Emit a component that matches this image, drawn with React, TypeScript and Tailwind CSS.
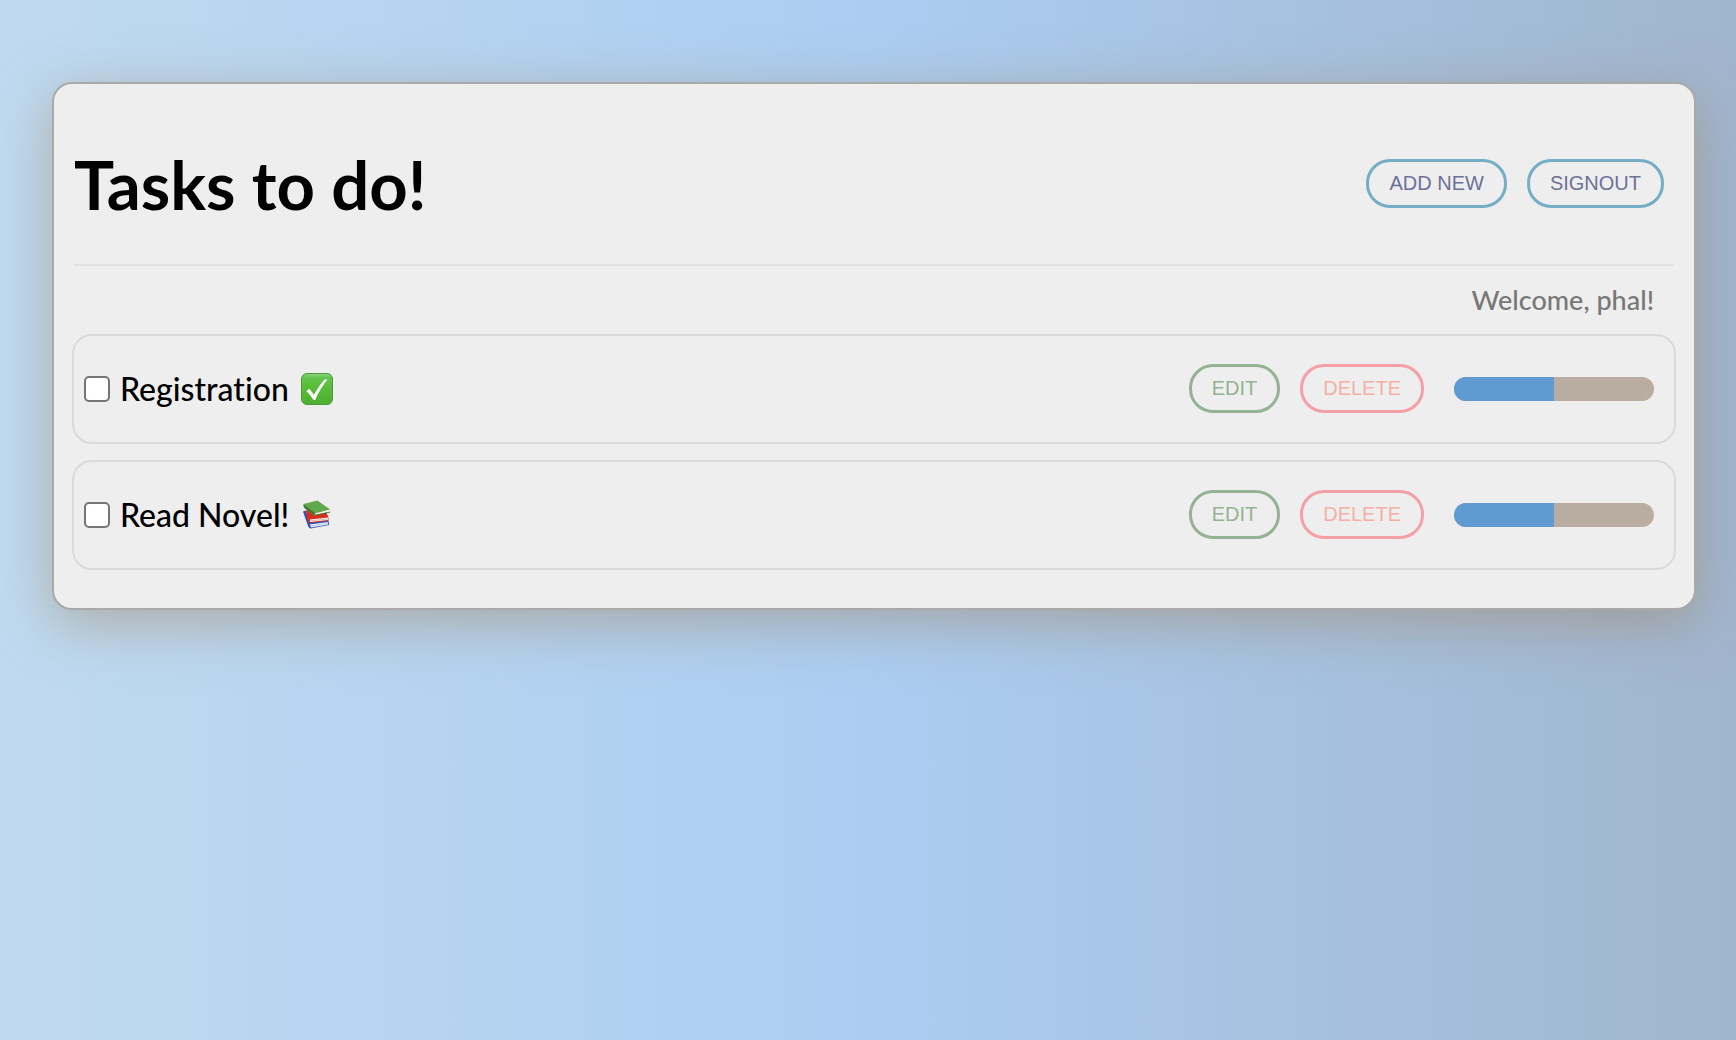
import { useId, type ReactNode } from 'react';

function CheckMarkIcon() {
  return (
    <svg className="size-8 shrink-0" viewBox="0 0 32 32" role="img" aria-label="Check mark">
      <defs>
        <linearGradient id="check-fill" x1="0" y1="0" x2="0" y2="1">
          <stop offset="0" stopColor="#8fd583" />
          <stop offset="0.14" stopColor="#63c44f" />
          <stop offset="0.35" stopColor="#5abf3c" />
          <stop offset="1" stopColor="#4fae30" />
        </linearGradient>
      </defs>
      <rect x="0.5" y="0.5" width="31" height="31" rx="5.5" fill="url(#check-fill)" stroke="#4a9a3a" />
      <path d="M5.4 18.1 L8.3 15.8 L13 21.8 C16.2 16 19.8 10.6 23.6 6.6 L26.4 6.6 C21.7 12.6 17.2 19.8 14.2 27 L12.6 27 C10.4 23.8 7.9 20.7 5.4 18.1 Z" fill="#fff" />
    </svg>
  );
}

function BooksIcon() {
  return (
    <svg className="size-8 shrink-0" viewBox="0 0 32 32" role="img" aria-label="Books">
      <path d="M2 12.6 L5 11.6 L8 22.4 L27.4 21.6 L28.2 26 L9.6 29.6 L7.4 28 Z" fill="#2f51b4" />
      <path d="M8.6 25.4 L26.8 23 L27.2 25.4 L10.2 28.4 Z" fill="#eef1fa" />
      <path d="M9.4 27 L27 24.2" stroke="#a9b4d8" strokeWidth="0.7" />
      <path d="M5 11 L25 13 L27.2 17.4 L27.6 21.8 L8.6 24 L6.4 20.6 Z" fill="#d92d20" />
      <path d="M8.8 20.6 L27 18.6 L27 21 L9.2 23 Z" fill="#f6eeea" />
      <path d="M9 21.9 L27 19.9" stroke="#c9aaa2" strokeWidth="0.7" />
      <path d="M2.4 5 L16.4 1.4 L29.2 10.6 L14.4 14.6 L13.4 16.6 L3 8.4 Z" fill="#5fa84c" />
      <path d="M14.4 14.2 L28.6 10.8 L28.4 12.8 L14 16 Z" fill="#f3f3ee" />
      <path d="M2.4 5.4 L13.8 13.8 L13.6 16.4 L3 8.6 Z" fill="#3a7c2f" />
      <path d="M13.6 16.5 L29.2 13" stroke="#2f6d29" strokeWidth="0.9" />
    </svg>
  );
}

const pill = 'rounded-3xl border-3 px-5 py-[9px] font-[Liberation_Sans,Arial,sans-serif] text-xl/[25px]';

function Task({ title, icon, progress }: { title: string; icon: ReactNode; progress: number }) {
  const id = useId();
  return (
    <li className="-mx-0.5 flex h-[110px] items-center rounded-[20px] border-2 border-[#dadada] pr-5 pb-px pl-2.5">
      <input
        id={id}
        type="checkbox"
        className="size-[26px] shrink-0 appearance-none rounded-[5px] border-2 border-[#767676] bg-white checked:bg-[#5f9bd0]"
      />
      <label htmlFor={id} className="ml-2.5 flex items-center gap-3 text-[32px]/[40px] font-medium text-black">
        {title}
        {icon}
      </label>
      <div className="ml-auto flex items-center gap-5">
        <button type="button" className={`${pill} border-[#94b294] text-[#94b294]`}>EDIT</button>
        <button type="button" className={`${pill} border-[#f4a0a6] text-[#f4b0a6]`}>DELETE</button>
      </div>
      <div
        role="progressbar"
        aria-label={`${title} progress`}
        aria-valuenow={progress}
        aria-valuemin={0}
        aria-valuemax={100}
        className="ml-[30px] h-6 w-[200px] overflow-hidden rounded-xl bg-[#b8ada0]"
      >
        <div className="h-full bg-[#5f9bd0]" style={{ width: `${progress}%` }} />
      </div>
    </li>
  );
}

export default function App() {
  return (
    <main className="min-h-screen bg-linear-to-r from-[#bfdaf0] via-[#abcdf1] to-[#a0b5ce] pt-[82px] pr-10 pl-[52px] font-[Lato,sans-serif] [font-variant-ligatures:none]">
      <section className="rounded-[20px] border-2 border-[#a9a9a9] bg-[#eeeeee] px-5 pt-5 pb-[38px] shadow-[0_14px_56px_rgba(160,135,105,0.55)]">
        <header className="flex h-[162px] items-center justify-between border-b-2 border-[#e1e1e1] pr-2.5 pb-px">
          <h1 className="text-[67px]/[80px] font-bold text-black">Tasks to do!</h1>
          <div className="flex gap-5">
            <button type="button" className={`${pill} border-[#76adc6] text-[#6d7198]`}>ADD NEW</button>
            <button type="button" className={`${pill} border-[#76adc6] text-[#6d7198]`}>SIGNOUT</button>
          </div>
        </header>
        <p className="py-[18px] pr-5 text-right text-[27px]/[32px] font-medium text-[#777777]">Welcome, phal!</p>
        <ul className="flex flex-col gap-4">
          <Task title="Registration" icon={<CheckMarkIcon />} progress={50} />
          <Task title="Read Novel!" icon={<BooksIcon />} progress={50} />
        </ul>
      </section>
    </main>
  );
}
